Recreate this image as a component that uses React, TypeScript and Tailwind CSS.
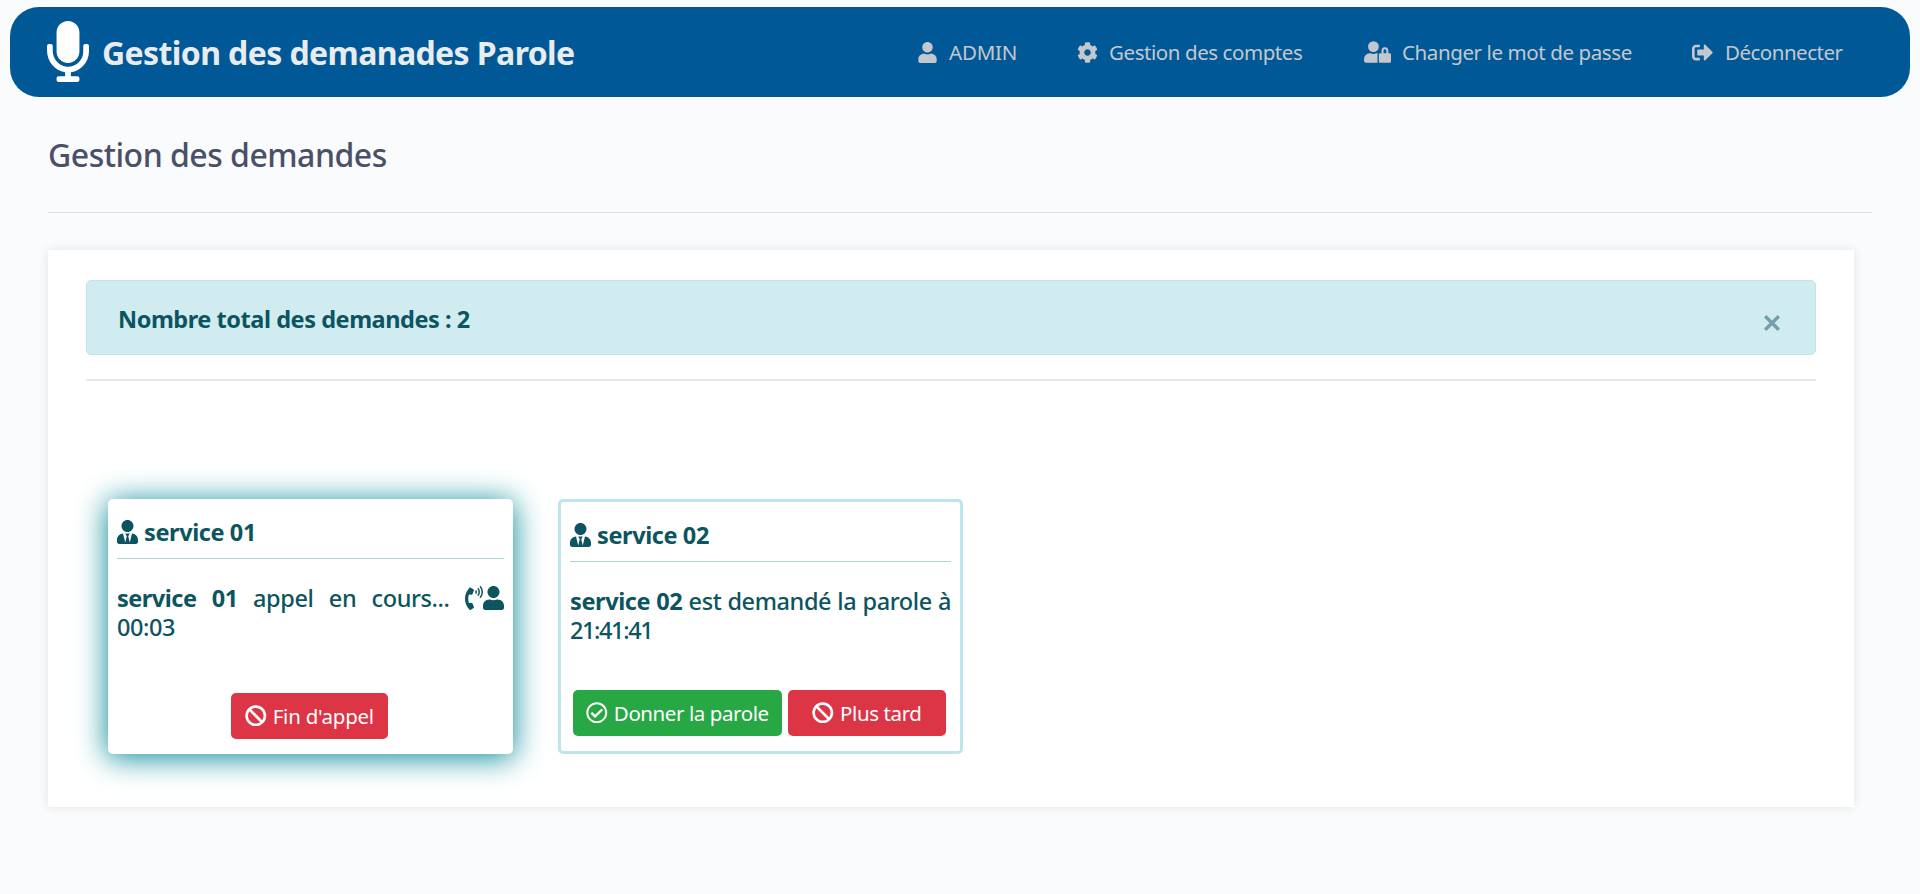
import type { ReactNode } from "react";
import {
  FaBan,
  FaCog,
  FaMicrophone,
  FaPhoneVolume,
  FaRegCheckCircle,
  FaSignOutAlt,
  FaUser,
  FaUserTie,
} from "react-icons/fa";

function UserLockIcon({ className }: { className: string }) {
  return (
    <svg viewBox="0 0 640 512" fill="currentColor" className={className}>
      <path d="M224 256A128 128 0 1 0 96 128a128 128 0 0 0 128 128zm96 64a63.08 63.08 0 0 1 8.1-30.5c-4.8-.5-9.5-1.5-14.5-1.5h-16.7a174.08 174.08 0 0 1-145.8 0h-16.7A134.43 134.43 0 0 0 0 422.4V464a48 48 0 0 0 48 48h280.9a63.54 63.54 0 0 1-8.9-32zm288-32h-32v-64a80 80 0 0 0-160 0v64h-32a32 32 0 0 0-32 32v160a32 32 0 0 0 32 32h224a32 32 0 0 0 32-32V320a32 32 0 0 0-32-32zM528 288h-64v-64a32 32 0 0 1 64 0z" />
    </svg>
  );
}

function NavItem({ icon, children, className }: { icon: ReactNode; children: ReactNode; className: string }) {
  return (
    <a href="#" className={`flex items-center whitespace-nowrap text-[20.5px] text-[#c4c8ce] ${className}`}>
      {icon}
      <span>{children}</span>
    </a>
  );
}

function CardHeader({ name }: { name: string }) {
  return (
    <div className="flex h-[60px] items-center border-b border-[#a9d5da] pt-[6px]">
      <FaUserTie className="mr-[6px] h-6 w-[21px] shrink-0" />
      <h2 className="pt-[2px] text-[23.5px] font-bold leading-[29px] tracking-[-0.4px]">{name}</h2>
    </div>
  );
}

function Button({ icon, children, className }: { icon: ReactNode; children: ReactNode; className: string }) {
  return (
    <button
      type="button"
      className={`flex h-[46px] items-center justify-center gap-[6px] whitespace-nowrap rounded-[5px] text-[20.5px] text-white ${className}`}
    >
      {icon}
      <span className="pt-[2px]">{children}</span>
    </button>
  );
}

export default function App() {
  return (
    <div className="h-[894px] overflow-hidden bg-[#fafbfd] pt-[7px] font-['Noto_Sans',sans-serif]">
      <nav className="mx-[10px] flex h-[90px] items-center justify-between rounded-[29px] bg-[#005896] pl-[37px] pr-[67px]">
        <a href="#" className="flex items-center">
          <FaMicrophone className="mb-px mr-[13px] h-[61px] w-[42px] text-white" />
          <span className="whitespace-nowrap pt-[2px] text-[32px] font-bold tracking-[-0.6px] text-[#e9ecef]">
            Gestion des demanades Parole
          </span>
        </a>
        <div className="flex items-center">
          <NavItem className="w-[159px] gap-[12px] tracking-[-0.2px]" icon={<FaUser className="h-[21px] w-[19px]" />}>
            ADMIN
          </NavItem>
          <NavItem className="w-[287px] gap-[11px] tracking-[-0.43px]" icon={<FaCog className="size-[21px]" />}>
            Gestion des comptes
          </NavItem>
          <NavItem className="w-[328px] gap-[11px] tracking-[-0.4px]" icon={<UserLockIcon className="h-[22px] w-[27px]" />}>
            Changer le mot de passe
          </NavItem>
          <NavItem className="w-[151px] gap-[12px] tracking-[-0.5px]" icon={<FaSignOutAlt className="size-[21px]" />}>
            Déconnecter
          </NavItem>
        </div>
      </nav>

      <main className="pl-12 pr-12 pt-[35px]">
        <h1 className="h-[81px] border-b border-[#dddfe2] text-[32px] font-medium leading-[46px] tracking-[-0.5px] text-[#4a5068]">
          Gestion des demandes
        </h1>

        <section className="mr-[18px] mt-[37px] h-[557px] bg-white px-[38px] pt-[30px] text-[#0c5460] shadow-[0_0_10px_rgba(0,0,0,0.1)]">
          <div className="flex h-[75px] items-center justify-between rounded-[5px] border border-[#bee5eb] bg-[#d1ecf1] pl-[31px] pr-[35px]">
            <p className="pt-[4px] text-[23.5px] font-bold tracking-[-0.45px]">Nombre total des demandes : 2</p>
            <button type="button" aria-label="Fermer" className="mt-[10px] text-[#72a0a8]">
              <svg viewBox="0 0 16 16" className="size-4" fill="none" stroke="currentColor" strokeWidth="3.4">
                <path d="M1.2 1.2 14.8 14.8M14.8 1.2 1.2 14.8" />
              </svg>
            </button>
          </div>
          <div className="mt-6 h-0.5 bg-[#e8e8e8]" />

          <div className="mt-[118px] flex items-start gap-[45px] pl-[22px]">
            <article className="h-[255px] w-[405px] rounded-[5px] bg-white px-[9px] shadow-[0_3px_30px_1px_#0d8d9b]">
              <CardHeader name="service 01" />
              <p className="mt-[25px] text-justify text-[23.5px] font-medium leading-[28.8px] tracking-[-0.4px]">
                <b className="font-bold tracking-[-0.5px]">service 01</b> appel en cours...{" "}
                <span className="inline-flex align-[-3px]">
                  <FaPhoneVolume className="h-6 w-[18px]" />
                  <FaUser className="h-6 w-[21px]" />
                </span>{" "}
                00:03
              </p>
              <div className="mt-[51px] flex pl-[114px]">
                <Button className="w-[157px] bg-[#dc3545] tracking-[-0.25px]" icon={<FaBan className="size-[21.6px]" />}>
                  Fin d'appel
                </Button>
              </div>
            </article>

            <article className="h-[255px] w-[405px] rounded-[5px] border-[3px] border-[#bee5eb] bg-white px-[9px]">
              <CardHeader name="service 02" />
              <p className="mt-[25px] text-justify text-[23.5px] font-medium leading-[28.8px] tracking-[-0.4px]">
                <b className="font-bold">service 02</b> est demandé la parole à{" "}
                <span className="tracking-[-1.4px]">21:41:41</span>
              </p>
              <div className="mt-[45px] flex gap-[6px] pl-[3px]">
                <Button className="w-[209px] bg-[#28a745] tracking-[-0.42px]" icon={<FaRegCheckCircle className="size-[21.6px]" />}>
                  Donner la parole
                </Button>
                <Button className="w-[158px] bg-[#dc3545] tracking-[-0.4px]" icon={<FaBan className="size-[21.6px]" />}>
                  Plus tard
                </Button>
              </div>
            </article>
          </div>
        </section>
      </main>
    </div>
  );
}
